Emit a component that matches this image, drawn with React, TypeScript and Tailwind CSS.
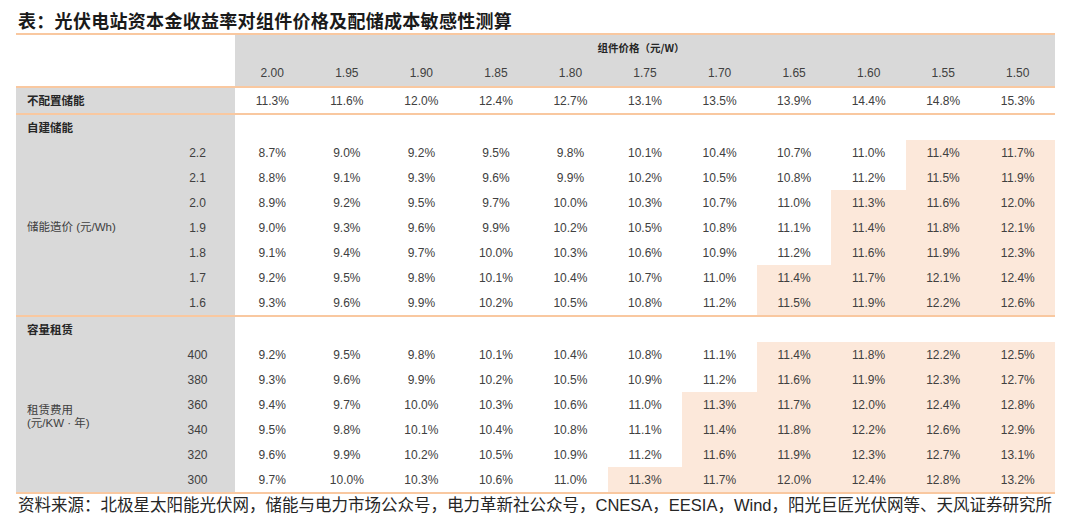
import React from "react";

const FONT = { fontFamily: '"Liberation Sans", Arial, "Noto Sans CJK SC", sans-serif' };
const CJK = { fontFamily: '"Noto Sans CJK SC", "Liberation Sans", sans-serif' };

const PRICES = ["2.00", "1.95", "1.90", "1.85", "1.80", "1.75", "1.70", "1.65", "1.60", "1.55", "1.50"];
const NO_STORAGE = [11.3, 11.6, 12.0, 12.4, 12.7, 13.1, 13.5, 13.9, 14.4, 14.8, 15.3];

type Row = { key: string; values: number[]; hlFrom: number };

const SELF_BUILT: Row[] = [
  { key: "2.2", values: [8.7, 9.0, 9.2, 9.5, 9.8, 10.1, 10.4, 10.7, 11.0, 11.4, 11.7], hlFrom: 9 },
  { key: "2.1", values: [8.8, 9.1, 9.3, 9.6, 9.9, 10.2, 10.5, 10.8, 11.2, 11.5, 11.9], hlFrom: 9 },
  { key: "2.0", values: [8.9, 9.2, 9.5, 9.7, 10.0, 10.3, 10.7, 11.0, 11.3, 11.6, 12.0], hlFrom: 8 },
  { key: "1.9", values: [9.0, 9.3, 9.6, 9.9, 10.2, 10.5, 10.8, 11.1, 11.4, 11.8, 12.1], hlFrom: 8 },
  { key: "1.8", values: [9.1, 9.4, 9.7, 10.0, 10.3, 10.6, 10.9, 11.2, 11.6, 11.9, 12.3], hlFrom: 8 },
  { key: "1.7", values: [9.2, 9.5, 9.8, 10.1, 10.4, 10.7, 11.0, 11.4, 11.7, 12.1, 12.4], hlFrom: 7 },
  { key: "1.6", values: [9.3, 9.6, 9.9, 10.2, 10.5, 10.8, 11.2, 11.5, 11.9, 12.2, 12.6], hlFrom: 7 },
];

const LEASE: Row[] = [
  { key: "400", values: [9.2, 9.5, 9.8, 10.1, 10.4, 10.8, 11.1, 11.4, 11.8, 12.2, 12.5], hlFrom: 7 },
  { key: "380", values: [9.3, 9.6, 9.9, 10.2, 10.5, 10.9, 11.2, 11.6, 11.9, 12.3, 12.7], hlFrom: 7 },
  { key: "360", values: [9.4, 9.7, 10.0, 10.3, 10.6, 11.0, 11.3, 11.7, 12.0, 12.4, 12.8], hlFrom: 6 },
  { key: "340", values: [9.5, 9.8, 10.1, 10.4, 10.8, 11.1, 11.4, 11.8, 12.2, 12.6, 12.9], hlFrom: 6 },
  { key: "320", values: [9.6, 9.9, 10.2, 10.5, 10.9, 11.2, 11.6, 11.9, 12.3, 12.7, 13.1], hlFrom: 6 },
  { key: "300", values: [9.7, 10.0, 10.3, 10.6, 11.0, 11.3, 11.7, 12.0, 12.4, 12.8, 13.2], hlFrom: 5 },
];

function Line() {
  return <div className="h-[2px] w-full bg-[#f9c8a0]" />;
}

function Cells({ values, hlFrom = 99 }: { values: number[]; hlFrom?: number }) {
  return (
    <div className="flex flex-1">
      {values.map((v, i) => (
        <div
          key={i}
          className={`flex h-[25px] flex-1 items-center justify-center text-[12px] text-[#404040] ${i >= hlFrom ? "bg-[#fce8da]" : ""}`}
        >
          {v.toFixed(1)}%
        </div>
      ))}
    </div>
  );
}

function Section({ title, label, rows }: { title: string; label: React.ReactNode; rows: Row[] }) {
  return (
    <div>
      <div className="flex h-[25px]">
        <div className="flex w-[219px] items-center bg-[#d9d9d9] pl-[11px] text-[11.5px] font-bold text-[#262626]" style={CJK}>
          {title}
        </div>
        <div className="flex-1" />
      </div>
      <div className="flex">
        <div className="flex w-[144px] items-center bg-[#d9d9d9] pl-[11px] text-[11.5px] leading-[13px] text-[#404040]">
          {label}
        </div>
        <div className="flex flex-1 flex-col">
          {rows.map((r) => (
            <div key={r.key} className="flex">
              <div className="flex h-[25px] w-[75px] items-center justify-center bg-[#d9d9d9] text-[12px] text-[#404040]">
                {r.key}
              </div>
              <Cells values={r.values} hlFrom={r.hlFrom} />
            </div>
          ))}
        </div>
      </div>
    </div>
  );
}

export default function App() {
  return (
    <div className="h-[523px] w-[1080px] bg-white" style={FONT}>
      <div className="ml-[16px] w-[1039px]">
        <div className="h-[33px] pl-[2px] pt-[11px] text-[18px] font-bold leading-[18px] tracking-[0.3px] text-[#1a1a1a]" style={CJK}>
          表：光伏电站资本金收益率对组件价格及配储成本敏感性测算
        </div>
        <Line />
        <div className="flex h-[51px]">
          <div className="w-[219px]" />
          <div className="flex flex-1 flex-col bg-[#d9d9d9]">
            <div className="flex h-[25px] items-center justify-center pr-[8px] text-[10.5px] font-bold text-[#262626]" style={CJK}>
              组件价格（元/W）
            </div>
            <div className="flex flex-1">
              {PRICES.map((p) => (
                <div key={p} className="flex flex-1 items-center justify-center text-[12px] text-[#404040]">
                  {p}
                </div>
              ))}
            </div>
          </div>
        </div>
        <Line />
        <div className="flex h-[25px]">
          <div className="flex w-[219px] items-center bg-[#d9d9d9] pl-[11px] text-[11.5px] font-bold text-[#262626]" style={CJK}>
            不配置储能
          </div>
          <Cells values={NO_STORAGE} />
        </div>
        <Line />
        <Section title="自建储能" label="储能造价 (元/Wh)" rows={SELF_BUILT} />
        <Line />
        <Section
          title="容量租赁"
          label={
            <span>
              租赁费用
              <br />
              (元/KW · 年)
            </span>
          }
          rows={LEASE}
        />
        <Line />
        <div className="pl-[2px] pt-[1px] text-[16.5px] leading-[20px] text-[#262626]">
          资料来源：北极星太阳能光伏网，储能与电力市场公众号，电力革新社公众号，CNESA，EESIA，Wind，阳光巨匠光伏网等、天风证券研究所
        </div>
      </div>
    </div>
  );
}
